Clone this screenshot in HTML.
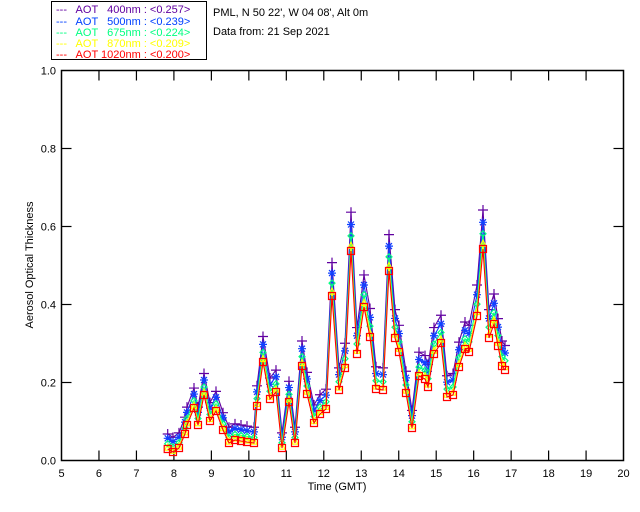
<!DOCTYPE html>
<html><head><meta charset="utf-8"><style>
html,body{margin:0;padding:0;background:#fff;width:640px;height:512px;overflow:hidden}
svg{display:block}
text{font-family:"Liberation Sans",sans-serif;font-size:11px;white-space:pre}
</style></head><body>
<svg id="s" width="640" height="512" xmlns="http://www.w3.org/2000/svg" xml:space="preserve">
<rect x="51.5" y="1.5" width="155" height="58" fill="none" stroke="#000" stroke-width="1"/>
<g font-size="11">
<text x="56" y="13" fill="#6000a0">---   AOT   400nm : &lt;0.257&gt;</text>
<text x="56" y="25" fill="#0040ff">---   AOT   500nm : &lt;0.239&gt;</text>
<text x="56" y="36" fill="#00ff80">---   AOT   675nm : &lt;0.224&gt;</text>
<text x="56" y="47" fill="#ffff00">---   AOT   870nm : &lt;0.209&gt;</text>
<text x="56" y="58" fill="#ff0000">---   AOT 1020nm : &lt;0.200&gt;</text>
<text x="213" y="16" fill="#000">PML, N 50 22', W 04 08', Alt 0m</text>
<text x="213" y="35" fill="#000">Data from: 21 Sep 2021</text>
</g>
<rect x="61.5" y="70.5" width="562" height="390" fill="none" stroke="#000" stroke-width="1.5"/>
<g id="ax" stroke="#000" stroke-width="1.2"></g>
<g id="lab" fill="#000"></g>
<text x="33" y="265" fill="#000" text-anchor="middle" transform="rotate(-90 33 265)" font-size="10">Aerosol Optical Thickness</text>
<text x="337" y="490" fill="#000" text-anchor="middle">Time (GMT)</text>
<g id="data"></g>
</svg>
<script>
var NS="http://www.w3.org/2000/svg";
function el(p,t,a,txt){var e=document.createElementNS(NS,t);for(var k in a)e.setAttribute(k,a[k]);if(txt!==undefined)e.textContent=txt;document.getElementById(p).appendChild(e);return e;}
var X0=61.5,XS=37.47,Y0=460.5,YS=390;
for(var h=5;h<=20;h++){var x=X0+(h-5)*XS;
 if(h>5&&h<20){el("ax","line",{x1:x,y1:460.5,x2:x,y2:450.5});el("ax","line",{x1:x,y1:70.5,x2:x,y2:80.5});}
 el("lab","text",{x:x,y:477,"text-anchor":"middle"},String(h));}
for(var i=0;i<=5;i++){var y=Y0-i*78;
 if(i>0&&i<5){el("ax","line",{x1:61.5,y1:y,x2:71.5,y2:y});el("ax","line",{x1:623.5,y1:y,x2:613.5,y2:y});}
 el("lab","text",{x:56,y:y+4,"text-anchor":"end"},(i*0.2).toFixed(1));}
var P=[[167.7,449],[173,452],[179,448],[185,434],[187,425],[194,408],[198,425],[204,395],[210,421],[216,411],[223,430],[229,443],[235,440],[241,441],[247,442],[254,443],[257,406],[263,362],[270,399],[276,392],[282,448],[289,402],[295,443],[302,366],[307,394],[314,423],[320,414],[326,409],[332,296],[339,390],[345,368],[351,251],[357,354],[364,307],[370,337],[376,389],[383,390],[389,271],[395,338],[399,352],[406,393],[412,428],[419,376],[425,379],[428,387],[434,354],[441,343],[447,397],[453,395],[459,367],[465,349],[469,352],[477,316],[483,249],[489,338],[494,324],[498,346],[502,366],[505,370]];
var S=[["#6000a0",1.12,0.035,"plus"],["#1040ff",1.08,0.025,"star"],["#00ff80",1.05,0.012,"dia"],["#ffff00",1.02,0.004,"tri"],["#ff0000",1,0,"sq"]];
S.forEach(function(s){
 var pts=P.map(function(p){var v=(Y0-p[1])/YS;v=v*s[1]+s[2];return [p[0],Y0-v*YS];});
 el("data","polyline",{points:pts.map(function(q){return q.join(",")}).join(" "),fill:"none",stroke:s[0],"stroke-width":1.1});
 pts.forEach(function(q){var x=q[0],y=q[1],d;
  if(s[3]=="plus")d="M"+(x-5)+" "+y+"H"+(x+5)+"M"+x+" "+(y-5)+"V"+(y+5);
  else if(s[3]=="star")d="M"+(x-4)+" "+y+"H"+(x+4)+"M"+x+" "+(y-4)+"V"+(y+4)+"M"+(x-3)+" "+(y-3)+"L"+(x+3)+" "+(y+3)+"M"+(x-3)+" "+(y+3)+"L"+(x+3)+" "+(y-3);
  else if(s[3]=="dia")d="M"+x+" "+(y-3)+"L"+(x+3)+" "+y+"L"+x+" "+(y+3)+"L"+(x-3)+" "+y+"Z";
  else if(s[3]=="tri")d="M"+x+" "+(y-3)+"L"+(x+3)+" "+(y+3)+"L"+(x-3)+" "+(y+3)+"Z";
  else d="M"+(x-3.5)+" "+(y-3.5)+"h7v7h-7Z";
  el("data","path",{d:d,fill:"none",stroke:s[0],"stroke-width":1.2});});
});
</script>
</body></html>
